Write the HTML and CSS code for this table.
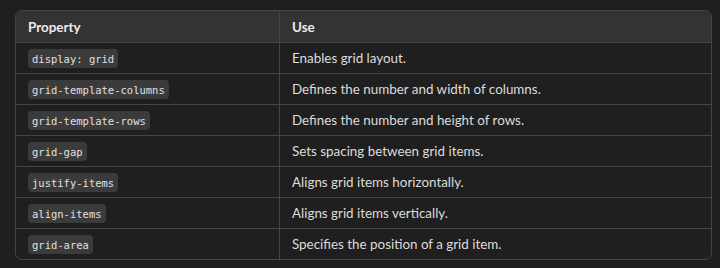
FILE: index.html
```html
<!DOCTYPE html>
<html lang="en">
  <head>
    <meta charset="UTF-8" />
    <meta name="viewport" content="width=device-width, initial-scale=1.0" />
    <title>Grid properties</title>
    <link rel="stylesheet" href="styles.css">
  </head>
  <body>
    <table class="tabla">
      <thead>
        <tr>
          <th class="col-prop">Property</th>
          <th>Use</th>
        </tr>
      </thead>
      <tbody>
        <tr>
          <td><code>display: grid</code></td>
          <td>Enables grid layout.</td>
        </tr>
        <tr>
          <td><code>grid-template-columns</code></td>
          <td>Defines the number and width of columns.</td>
        </tr>
        <tr>
          <td><code>grid-template-rows</code></td>
          <td>Defines the number and height of rows.</td>
        </tr>
        <tr>
          <td><code>grid-gap</code></td>
          <td>Sets spacing between grid items.</td>
        </tr>
        <tr>
          <td><code>justify-items</code></td>
          <td>Aligns grid items horizontally.</td>
        </tr>
        <tr>
          <td><code>align-items</code></td>
          <td>Aligns grid items vertically.</td>
        </tr>
        <tr>
          <td><code>grid-area</code></td>
          <td>Specifies the position of a grid item.</td>
        </tr>
      </tbody>
    </table>
  </body>
</html>
```

FILE: styles.css
```css
body {
  margin: 0;
  padding: 10px 0 0 15px;
  background-color: #1f1f1f;
  font-family: Lato, "Noto Sans", sans-serif;
  color: #dcdcdc;
}
.tabla {
  width: 697px;
  border-collapse: separate;
  border-spacing: 0;
  border: 1px solid #454545;
  border-radius: 7px;
  overflow: hidden;
  font-size: 13.4px;
}
.tabla th,
.tabla td {
  text-align: left;
  padding: 0 12px;
  border-bottom: 1px solid #454545;
  vertical-align: middle;
}
.tabla th:first-child,
.tabla td:first-child {
  border-right: 1px solid #454545;
}
.tabla tr:last-child td {
  border-bottom: none;
}
.tabla th {
  height: 31px;
  background-color: #333333;
  color: #ececec;
  font-weight: bold;
}
.tabla td {
  height: 30px;
}
.col-prop {
  width: 239px;
}
code {
  font-family: "DejaVu Sans Mono", monospace;
  font-size: 10.5px;
  background-color: #3b3b3b;
  color: #e0e0e0;
  padding: 4px 4px 3px;
  border-radius: 4px;
}
/* .tabla tbody tr:hover { background-color: #262626; } */
```
